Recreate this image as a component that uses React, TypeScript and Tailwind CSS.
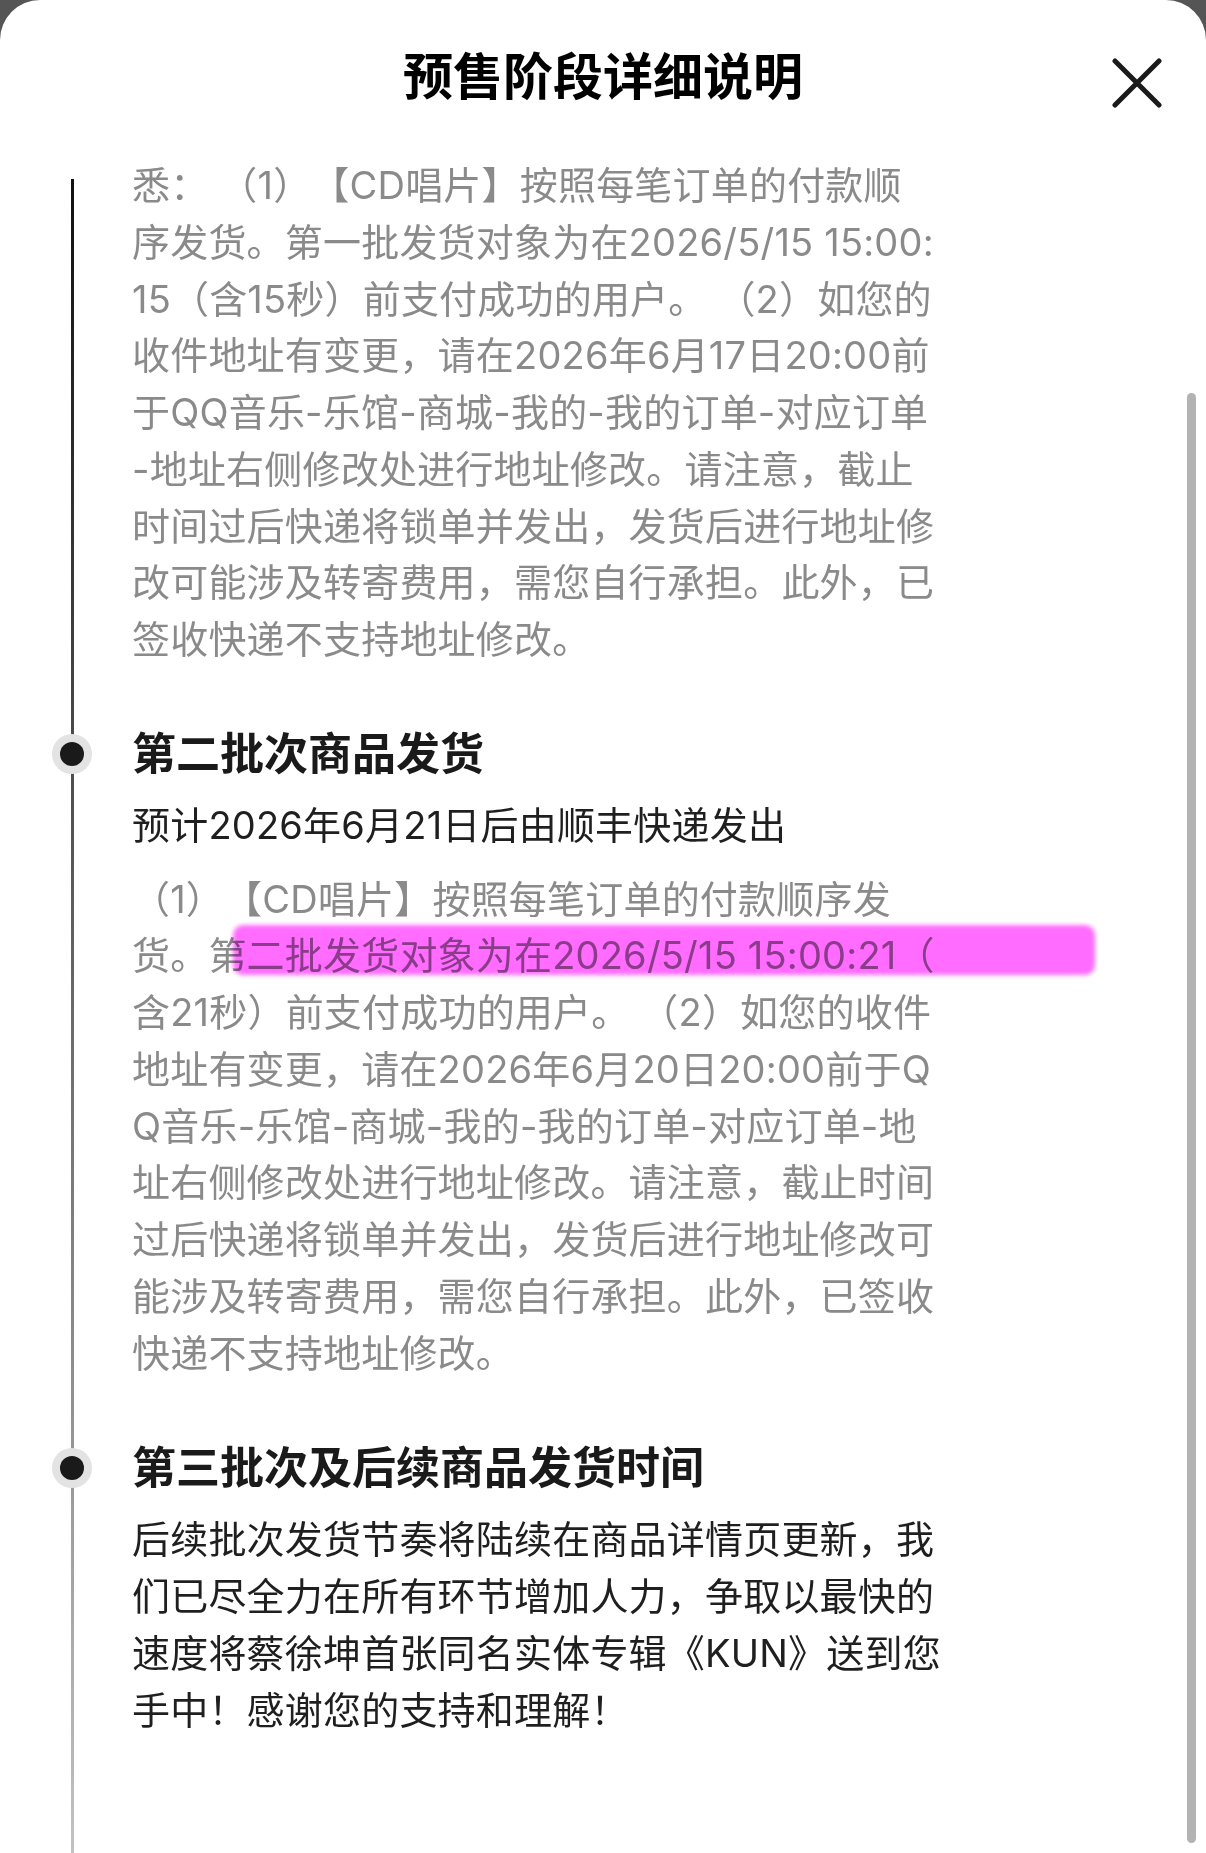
import { FC } from "react";

const firstBatchTail = [
  "悉： （1）【CD唱片】按照每笔订单的付款顺",
  "序发货。第一批发货对象为在2026/5/15 15:00:",
  "15（含15秒）前支付成功的用户。 （2）如您的",
  "收件地址有变更，请在2026年6月17日20:00前",
  "于QQ音乐-乐馆-商城-我的-我的订单-对应订单",
  "-地址右侧修改处进行地址修改。请注意，截止",
  "时间过后快递将锁单并发出，发货后进行地址修",
  "改可能涉及转寄费用，需您自行承担。此外，已",
  "签收快递不支持地址修改。",
];

const secondBatch = [
  "（1）【CD唱片】按照每笔订单的付款顺序发",
  "货。第二批发货对象为在2026/5/15 15:00:21（",
  "含21秒）前支付成功的用户。 （2）如您的收件",
  "地址有变更，请在2026年6月20日20:00前于Q",
  "Q音乐-乐馆-商城-我的-我的订单-对应订单-地",
  "址右侧修改处进行地址修改。请注意，截止时间",
  "过后快递将锁单并发出，发货后进行地址修改可",
  "能涉及转寄费用，需您自行承担。此外，已签收",
  "快递不支持地址修改。",
];

const laterBatches = [
  "后续批次发货节奏将陆续在商品详情页更新，我",
  "们已尽全力在所有环节增加人力，争取以最快的",
  "速度将蔡徐坤首张同名实体专辑《KUN》送到您",
  "手中！感谢您的支持和理解！",
];

const Lines: FC<{ lines: string[]; className?: string }> = ({ lines, className }) => (
  <div className={"text-[38px] leading-[56.75px] tracking-[0.2px] " + (className ?? "")}>
    {lines.map((l, i) => (
      <div key={i} className="whitespace-pre">
        {l}
      </div>
    ))}
  </div>
);

const StepTitle: FC<{ title: string; className?: string }> = ({ title, className }) => (
  <div className={"relative " + (className ?? "")}>
    <span className="absolute left-[-80px] top-[10px] flex h-[40px] w-[40px] items-center justify-center rounded-full bg-[#e3e3e3]">
      <span className="h-[24px] w-[24px] rounded-full bg-[#1a1a1a]" />
    </span>
    <h2 className="text-[44px] font-bold leading-[60px] text-[#1a1a1a]">{title}</h2>
  </div>
);

export default function App() {
  return (
    <div
      className="h-[1853px] w-[1206px] overflow-hidden bg-[#555555] [text-spacing-trim:space-all]"
      style={{ fontFamily: 'Inter, "Noto Sans CJK SC", sans-serif' }}
    >
      <div className="relative flex h-full flex-col rounded-t-[40px] bg-white">
        {/* header */}
        <div className="grid h-[157px] grid-cols-[1fr_auto_1fr] items-start pt-[49px]">
          <div />
          <h1 className="text-[50px] font-bold leading-[56px] text-black">预售阶段详细说明</h1>
          <div className="flex justify-end pr-[44px] pt-[9px]">
            <button aria-label="关闭" className="h-[50px] w-[50px]">
              <svg viewBox="0 0 50 50" className="h-[50px] w-[50px]">
                <path
                  d="M3 3 L47 47 M47 3 L3 47"
                  stroke="#1a1a1a"
                  strokeWidth="5"
                  strokeLinecap="round"
                  fill="none"
                />
              </svg>
            </button>
          </div>
        </div>

        {/* timeline body */}
        <div className="relative flex-1 pl-[132px]">
          <div className="absolute bottom-0 left-[71px] top-[22px] w-[3px] bg-gradient-to-b from-[#111111] via-[#6a6a6a] to-[#c2c2c2]" />

          <Lines lines={firstBatchTail} className="text-[#8a8a8a]" />

          <StepTitle title="第二批次商品发货" className="mt-[56px]" />
          <div className="mt-[13px] text-[38px] leading-[56.75px] tracking-[0.2px] text-[#1f1f1f]">
            预计2026年6月21日后由顺丰快递发出
          </div>
          <div className="relative mt-[17px]">
            <Lines lines={secondBatch} className="text-[#8a8a8a]" />
            <div className="pointer-events-none absolute left-[101px] top-[54px] h-[50px] w-[862px] rounded-[10px] bg-[#ff6cff] mix-blend-multiply blur-[2px]" />
          </div>

          <StepTitle title="第三批次及后续商品发货时间" className="mt-[57px]" />
          <Lines lines={laterBatches} className="mt-[13px] text-[#1f1f1f]" />
        </div>

        {/* scrollbar */}
        <div className="absolute right-[10px] top-[393px] h-[1450px] w-[9px] rounded-full bg-[#b3b3b3]" />
      </div>
    </div>
  );
}
